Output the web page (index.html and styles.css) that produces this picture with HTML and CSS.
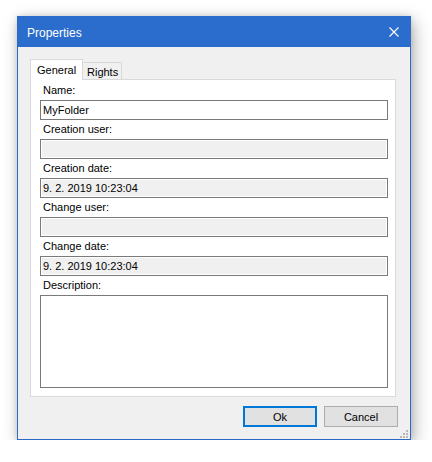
FILE: index.html
```
<!DOCTYPE html>
<html>
<head>
<meta charset="utf-8">
<link rel="stylesheet" href="styles.css">
</head>
<body>
<div class="window">
  <div class="titlebar">
    <span class="title">Properties</span>
    <svg class="close" width="10" height="10" viewBox="0 0 10 10"><path d="M0.5 0.5L9.5 9.5M9.5 0.5L0.5 9.5" stroke="#fff" stroke-width="1.1" fill="none"/></svg>
  </div>
  <div class="content">
    <div class="tabs">
      <div class="tab active">General</div>
      <div class="tab">Rights</div>
    </div>
    <div class="page">
      <div class="label">Name:</div>
      <div class="field">MyFolder</div>
      <div class="label">Creation user:</div>
      <div class="field ro"></div>
      <div class="label">Creation date:</div>
      <div class="field ro">9. 2. 2019 10:23:04</div>
      <div class="label">Change user:</div>
      <div class="field ro"></div>
      <div class="label">Change date:</div>
      <div class="field ro">9. 2. 2019 10:23:04</div>
      <div class="label">Description:</div>
      <div class="field memo"></div>
    </div>
    <div class="buttons">
      <div class="btn default">Ok</div>
      <div class="btn">Cancel</div>
    </div>
  </div>
  <svg class="grip" width="8" height="8" viewBox="0 0 8 8" fill="#b9b9b9">
    <rect x="6" y="0" width="2" height="2"/>
    <rect x="3" y="3" width="2" height="2"/><rect x="6" y="3" width="2" height="2"/>
    <rect x="0" y="6" width="2" height="2"/><rect x="3" y="6" width="2" height="2"/><rect x="6" y="6" width="2" height="2"/>
  </svg>
</div>
</body>
</html>
```
FILE: styles.css
```
* { box-sizing: border-box; }
html, body { margin: 0; background: #ffffff; }
body {
  padding: 16px 0 0 17px;
  font-family: "Liberation Sans", Arial, sans-serif;
  font-size: 11px;
  color: #000;
}
.window {
  position: relative;
  width: 394px;
  height: 424px;
  border: 1px solid #2b6bc6;
  background: #f0f0f0;
  box-shadow: 3px 5px 16px rgba(0,0,0,0.3), 0 0 6px rgba(0,0,0,0.12);
  display: flex;
  flex-direction: column;
}
.titlebar {
  height: 30px;
  background: #2b6dcc;
  color: #fff;
  display: flex;
  align-items: center;
  justify-content: space-between;
  padding: 0 11px 0 9px;
  font-size: 12px;
}
.title { padding-top: 1px; }
.close { display: block; }
.content {
  padding: 12px 12px 0 12px;
}
.tabs {
  display: flex;
  align-items: flex-end;
  height: 20px;
  position: relative;
  z-index: 1;
}
.tab {
  border: 1px solid #d9d9d9;
  border-bottom: none;
  background: #f0f0f0;
  height: 17px;
  padding: 2px 0 0 4px;
  width: 39px;
  border-left: none;
  line-height: 14px;
}
.tab.active {
  background: #fff;
  width: 53px;
  height: 21px;
  margin-bottom: -1px;
  border-left: 1px solid #d9d9d9;
  padding: 2px 0 0 6px;
  line-height: 16px;
}
.page {
  width: 366px;
  height: 318px;
  border: 1px solid #d9d9d9;
  background: #fff;
  padding: 1px 9px 0 9px;
}
.label {
  height: 19px;
  line-height: 19px;
  padding-left: 3px;
}
.field {
  width: 348px;
  height: 20px;
  border: 1px solid #7a7a7a;
  background: #fff;
  line-height: 18px;
  padding-left: 2px;
}
.field.ro {
  background: #f0f0f0;
  box-shadow: inset 1px 1px 0 #fff, inset -1px -1px 0 #fff;
}
.field.memo {
  height: 93px;
}
.buttons {
  display: flex;
  justify-content: flex-end;
  gap: 7px;
  margin-top: 9px;
}
.btn {
  width: 74px;
  height: 21px;
  border: 1px solid #adadad;
  background: #e1e1e1;
  display: flex;
  align-items: center;
  justify-content: center;
  font-size: 11px;
}
.btn.default {
  border: 2px solid #0078d7;
}
.grip {
  position: absolute;
  right: 2px;
  bottom: 1px;
}
```
